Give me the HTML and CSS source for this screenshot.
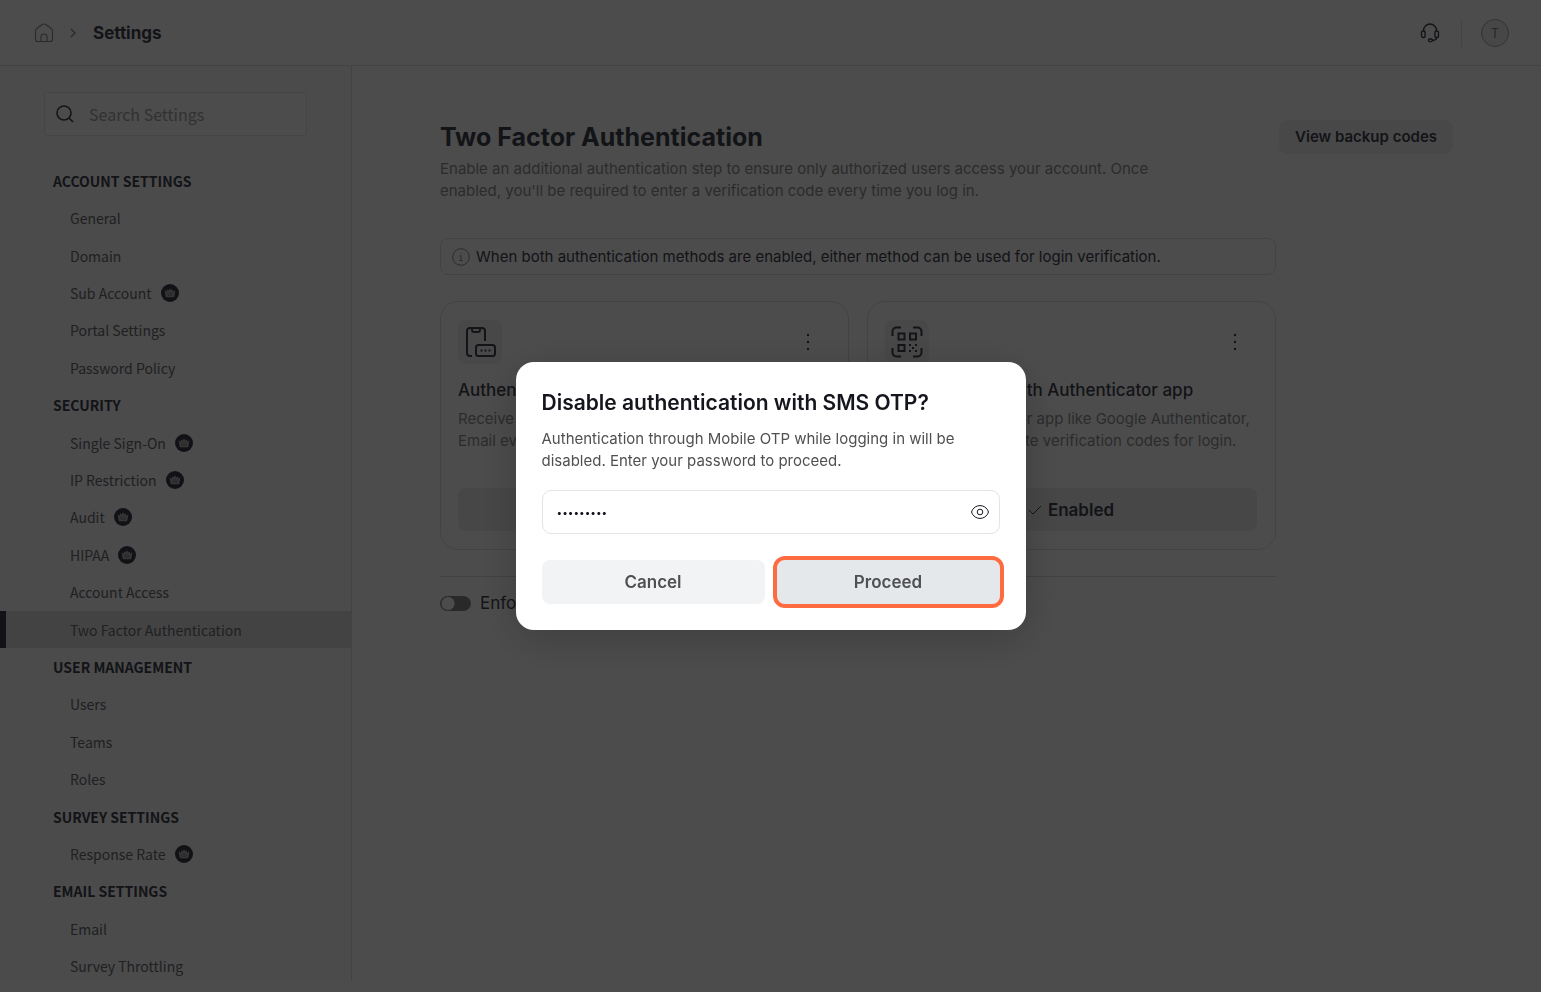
FILE: index.html
```html
<!DOCTYPE html>
<html lang="en">
<head>
  <meta charset="utf-8">
  <title>Settings</title>
  <link rel="stylesheet" href="styles.css">
</head>
<body>
  <!-- shared icons -->
  <svg class="sprite" aria-hidden="true">
    <symbol id="crown" viewBox="0 0 18 18">
      <circle cx="9" cy="9" r="9" fill="#3c3d4c"/>
      <path d="M3.600 6.200l2.300 1.600.3-2.600 1.500 1.200L9 4.200l1.300 2.200 1.500-1.200.3 2.600 2.300-1.600-1 6c-.1.700-.6 1.100-1.300 1.100H5.900c-.7 0-1.200-.4-1.300-1.100z" fill="#b4b4b6"/>
      <path d="M6.800 8.500l.6 3.500M11.200 8.500l-.6 3.500M9 7.500V12" stroke="#5c5d68" stroke-width=".6"/>
    </symbol>
    <symbol id="dots" viewBox="0 0 4 18">
      <circle cx="2" cy="2" r="1.200"/><circle cx="2" cy="9" r="1.200"/><circle cx="2" cy="16" r="1.200"/>
    </symbol>
  </svg>

  <div class="page">
    <header class="topbar">
      <a class="home" href="#" aria-label="Home">
        <svg width="20" height="20" viewBox="0 0 20 20" fill="none" stroke="currentColor" stroke-width="1.100">
          <path d="M1.500 8.300c0-1.200.5-2.200 1.400-2.900L7.400 2c1.500-1.200 3.700-1.200 5.200 0l4.500 3.400c.9.700 1.400 1.700 1.400 2.900v7.900c0 1.300-1 2.300-2.300 2.300H3.800c-1.300 0-2.300-1-2.300-2.300z"/>
          <path d="M7 18.500v-5c0-1.600 1.300-2.500 3-2.500s3 .9 3 2.500v5"/>
        </svg>
      </a>
      <svg class="chevron" width="6" height="10" viewBox="0 0 6 10" fill="none" stroke="currentColor" stroke-width="1.300"><path d="M1 1l4 4-4 4"/></svg>
      <span class="crumb">Settings</span>
      <div class="topbar-right">
        <button class="support" aria-label="Support">
          <svg width="20" height="20" viewBox="0 0 20 20" fill="none" stroke="currentColor" stroke-width="1.400">
            <path d="M3.500 8V7.500a6.500 6.500 0 0 1 13 0V8"/>
            <rect x="1.500" y="8" width="3.600" height="6.500" rx="1.500"/>
            <rect x="14.900" y="8" width="3.600" height="6.500" rx="1.500"/>
            <path d="M16.700 14.500c0 1.700-1.200 2.700-4.200 2.800"/>
            <rect x="8.500" y="16" width="4" height="2.600" rx="1.300"/>
          </svg>
        </button>
        <button class="avatar">T</button>
      </div>
    </header>

    <div class="layout">
      <aside class="sidebar">
        <div class="search">
          <svg width="18" height="18" viewBox="0 0 18 18" fill="none" stroke="currentColor" stroke-width="1.600"><circle cx="8" cy="8" r="7"/><path d="M13 13l4 4"/></svg>
          <input type="text" placeholder="Search Settings" aria-label="Search Settings">
        </div>
        <nav class="nav">
          <h2>ACCOUNT SETTINGS</h2>
          <a href="#">General</a>
          <a href="#">Domain</a>
          <a href="#">Sub Account <svg class="crown"><use href="#crown"/></svg></a>
          <a href="#">Portal Settings</a>
          <a href="#">Password Policy</a>
          <h2>SECURITY</h2>
          <a href="#">Single Sign-On <svg class="crown"><use href="#crown"/></svg></a>
          <a href="#">IP Restriction <svg class="crown"><use href="#crown"/></svg></a>
          <a href="#">Audit <svg class="crown"><use href="#crown"/></svg></a>
          <a href="#">HIPAA <svg class="crown"><use href="#crown"/></svg></a>
          <a href="#">Account Access</a>
          <a href="#" class="active">Two Factor Authentication</a>
          <h2>USER MANAGEMENT</h2>
          <a href="#">Users</a>
          <a href="#">Teams</a>
          <a href="#">Roles</a>
          <h2>SURVEY SETTINGS</h2>
          <a href="#">Response Rate <svg class="crown"><use href="#crown"/></svg></a>
          <h2>EMAIL SETTINGS</h2>
          <a href="#">Email</a>
          <a href="#">Survey Throttling</a>
        </nav>
      </aside>

      <main class="content">
        <div class="content-head">
          <div>
            <h1>Two Factor Authentication</h1>
            <p>Enable an additional authentication step to ensure only authorized users access your account. Once<br>enabled, you'll be required to enter a verification code every time you log in.</p>
          </div>
          <button class="backup">View backup codes</button>
        </div>

        <div class="methods">
          <div class="notice">
            <svg width="18" height="18" viewBox="0 0 18 18" fill="none" stroke="currentColor"><circle cx="9" cy="9" r="8.300"/><path d="M7.500 7.800H9v4.700M7.200 12.500h3.600M8.500 5.300h1"/></svg>
            When both authentication methods are enabled, either method can be used for login verification.
          </div>

          <div class="cards">
            <section class="card">
              <div class="card-top">
                <span class="tile">
                  <svg width="32" height="32" viewBox="0 0 32 32" fill="none" stroke="currentColor" stroke-width="2">
                    <path d="M8 30H6c-1.800 0-3-1.200-3-3V5c0-1.800 1.200-3 3-3h12c1.800 0 3 1.200 3 3v10"/>
                    <path d="M8 2v1.500C8 4.900 8.900 6 10.300 6h3.400C15.100 6 16 4.900 16 3.500V2"/>
                    <rect x="12" y="19" width="19" height="11" rx="2.500"/>
                    <path d="M16.500 24.500h2m2 0h2m2 0h2"/>
                  </svg>
                </span>
                <button class="more" aria-label="More"><svg width="4" height="18" fill="currentColor"><use href="#dots"/></svg></button>
              </div>
              <h3>Authentication with SMS OTP</h3>
              <p>Receive a one-time password via SMS or<br>Email every time you log in.</p>
              <button class="state"><svg width="14" height="10" viewBox="0 0 14 10" fill="none" stroke="currentColor"><path d="M1 5l4 4 8-8"/></svg>Enabled</button>
            </section>
            <section class="card">
              <div class="card-top">
                <span class="tile">
                  <svg width="32" height="32" viewBox="0 0 32 32" fill="none" stroke="currentColor" stroke-width="2">
                    <path d="M1.500 10V5.500c0-2.200 1.800-4 4-4H10M22 1.500h4.500c2.200 0 4 1.800 4 4V10M30.500 22v4.500c0 2.200-1.800 4-4 4H22M10 30.500H5.500c-2.200 0-4-1.800-4-4V22"/>
                    <path d="M7.500 7.500h6v6h-6zM19 7.500h6v6h-6zM7.500 19h6v6h-6z"/>
                    <path d="M18 19h2m4 0h2M21 22h2m-5 3h2m4 0h2"/>
                  </svg>
                </span>
                <button class="more" aria-label="More"><svg width="4" height="18" fill="currentColor"><use href="#dots"/></svg></button>
              </div>
              <h3>Authentication with Authenticator app</h3>
              <p>Use an authenticator app like Google Authenticator,<br>or similar, to generate verification codes for login.</p>
              <button class="state"><svg width="14" height="10" viewBox="0 0 14 10" fill="none" stroke="currentColor"><path d="M1 5l4 4 8-8"/></svg>Enabled</button>
            </section>
          </div>

          <div class="enforce">
            <input type="checkbox" id="enforce">
            <label for="enforce">Enforce</label>
          </div>
        </div>
      </main>
    </div>
  </div>

  <div class="overlay">
    <form class="dialog" role="dialog" aria-labelledby="dialog-title">
      <h2 id="dialog-title">Disable authentication with SMS OTP?</h2>
      <p>Authentication through Mobile OTP while logging in will be<br>disabled. Enter your password to proceed.</p>
      <div class="password">
        <input type="password" value="password1" aria-label="Password">
        <button type="button" aria-label="Show password">
          <svg width="18" height="14" viewBox="0 0 18 14" fill="none" stroke="currentColor"><path d="M9 .6c3.300 0 5.900 1.700 7.600 4.300.9 1.300.9 2.900 0 4.200C14.900 11.700 12.300 13.400 9 13.400S3.100 11.700 1.400 9.100c-.9-1.300-.9-2.900 0-4.200C3.100 2.300 5.700.6 9 .6z"/><circle cx="9" cy="7" r="2.800"/></svg>
        </button>
      </div>
      <div class="actions">
        <button type="button">Cancel</button>
        <button type="button" class="proceed">Proceed</button>
      </div>
    </form>
  </div>
</body>
</html>
```
FILE: styles.css
```css
* {
  box-sizing: border-box;
}

body {
  margin: 0;
  font-family: Inter, sans-serif;
  font-size: 15px;
  line-height: 22px;
  color: #42434f;
  background: #fff;
}

h1, h2, h3, p {
  margin: 0;
}

button {
  font: inherit;
  color: inherit;
  background: none;
  border: 0;
  padding: 0;
}

a {
  color: inherit;
  text-decoration: none;
}

svg {
  display: block;
  flex: none;
}

.sprite {
  position: absolute;
  width: 0;
  height: 0;
}

.page {
  display: flex;
  flex-direction: column;
  height: 100vh;
  overflow: hidden;
}

/* top bar */
.topbar {
  display: flex;
  align-items: center;
  flex: none;
  height: 66px;
  padding: 0 32px 0 34px;
  border-bottom: 1px solid #e2e2e5;
}

.home,
.chevron {
  color: #8a8a8e;
}

.chevron {
  margin: 0 17px 0 16px;
}

.crumb {
  font-size: 17px;
  font-weight: 700;
}

.topbar-right {
  display: flex;
  align-items: center;
  margin-left: auto;
}

.support {
  padding-right: 21px;
}

.avatar {
  position: relative;
  width: 28px;
  height: 28px;
  margin-left: 20px;
  border: 1px solid #aaa;
  border-radius: 50%;
  background: #eeeeef;
  color: #888;
  font-size: 13px;
}

.avatar::before {
  content: "";
  position: absolute;
  left: -21px;
  top: 0;
  width: 1px;
  height: 27px;
  background: #e2e2e5;
}

/* sidebar */
.layout {
  display: flex;
  flex: 1;
  min-height: 0;
}

.sidebar {
  display: flex;
  flex-direction: column;
  width: 352px;
  margin-bottom: 11px;
  border-right: 1px solid #e2e2e5;
  background: #fafafa;
  font-family: "Noto Sans CJK SC", sans-serif;
  overflow: hidden;
}

.search {
  display: flex;
  align-items: center;
  flex: none;
  height: 44px;
  margin: 26px 44px;
  padding-left: 11px;
  border: 1px solid #e8e8ea;
  border-radius: 3px;
  background: #fff;
}

.search input {
  flex: 1;
  min-width: 0;
  padding: 0 15px;
  border: 0;
  background: none;
  font: inherit;
  font-size: 16px;
}

.search input::placeholder {
  color: #a6a6a8;
}

.nav {
  display: grid;
  grid-auto-rows: 1fr;
  flex: 1;
  margin-bottom: -4px;
}

.nav h2,
.nav a {
  display: flex;
  align-items: center;
  min-height: 0;
  font-size: 14px;
  line-height: 20px;
}

.nav h2 {
  padding-left: 53px;
  font-weight: 700;
}

.nav a {
  padding-left: 70px;
  color: #6c6d72;
}

.nav .active {
  padding-left: 64px;
  border-left: 6px solid #3c3e4e;
  background: #e2e2e3;
}

.crown {
  width: 18px;
  height: 18px;
  margin-left: 9px;
}

/* content */
.content {
  flex: 1;
  padding: 54px 88px 0;
}

.content-head {
  display: flex;
  justify-content: space-between;
  align-items: flex-start;
}

.content-head h1 {
  font-size: 25px;
  line-height: 34px;
  font-weight: 700;
}

.content p {
  color: #929295;
}

.content-head p {
  margin-top: 4px;
}

.backup {
  height: 34px;
  padding: 0 16px;
  border-radius: 8px;
  background: #f2f2f3;
  font-weight: 600;
}

.methods {
  max-width: 836px;
}

.notice {
  display: flex;
  align-items: center;
  gap: 6px;
  height: 37px;
  margin: 36px 0 26px;
  padding: 0 11px;
  border: 1px solid #e0e0e3;
  border-radius: 8px;
}

.notice svg {
  color: #929295;
}

.cards {
  display: grid;
  grid-template-columns: 1fr 1fr;
  gap: 18px;
  padding-bottom: 26px;
  border-bottom: 1px solid #dadadd;
}

.card {
  padding: 18px 18px 18px 17px;
  border: 1px solid #e0e0e3;
  border-radius: 18px;
  white-space: nowrap;
}

.card-top {
  display: flex;
  justify-content: space-between;
  align-items: center;
}

.tile {
  display: grid;
  place-items: center;
  width: 44px;
  height: 44px;
  border-radius: 8px;
  background: #f2f2f3;
}

.more {
  padding: 0 20px;
}

.card h3 {
  margin: 14px 0 6px;
  font-size: 17px;
  line-height: 24px;
  font-weight: 500;
}

.state {
  display: flex;
  align-items: center;
  justify-content: center;
  gap: 6px;
  width: 100%;
  height: 43px;
  margin-top: 36px;
  border-radius: 8px;
  background: #eeeeef;
  font-size: 17px;
  font-weight: 600;
}

.enforce {
  display: flex;
  align-items: center;
  gap: 9px;
  margin-top: 15px;
  font-size: 17px;
}

.enforce input {
  appearance: none;
  width: 31px;
  height: 15px;
  margin: 0;
  border: 1px solid #8a8a8e;
  border-radius: 8px;
  background: radial-gradient(circle at 7px 50%, #fff 6px, #8a8a8e 7px);
}

/* dialog */
.overlay {
  position: fixed;
  inset: 0;
  display: flex;
  align-items: center;
  justify-content: center;
  background: rgba(0, 0, 0, 0.7);
}

.dialog {
  width: 510px;
  padding: 26px;
  border-radius: 18px;
  background: #fff;
  box-shadow: 0 9px 44px rgba(0, 0, 0, 0.2);
  color: #505052;
}

.dialog h2 {
  font-size: 21px;
  line-height: 30px;
  font-weight: 600;
  color: #15161d;
  white-space: nowrap;
}

.dialog p {
  margin: 10px 0 18px;
}

.password {
  display: flex;
  align-items: center;
  height: 44px;
  padding: 0 10px 0 14px;
  border: 1px solid #e2e4e8;
  border-radius: 9px;
  color: #15161d;
}

.password input {
  flex: 1;
  padding: 0;
  border: 0;
  outline: 0;
  color: inherit;
  font: 10px Inter, sans-serif;
}

.actions {
  display: grid;
  grid-template-columns: 1fr 1fr;
  gap: 12px;
  margin-top: 26px;
}

.actions button {
  height: 44px;
  border-radius: 8px;
  background: #f2f3f5;
  font-size: 17px;
  font-weight: 600;
}

.actions .proceed {
  background: #e4e8eb;
  outline: 4px solid #ff6b40;
}
```
